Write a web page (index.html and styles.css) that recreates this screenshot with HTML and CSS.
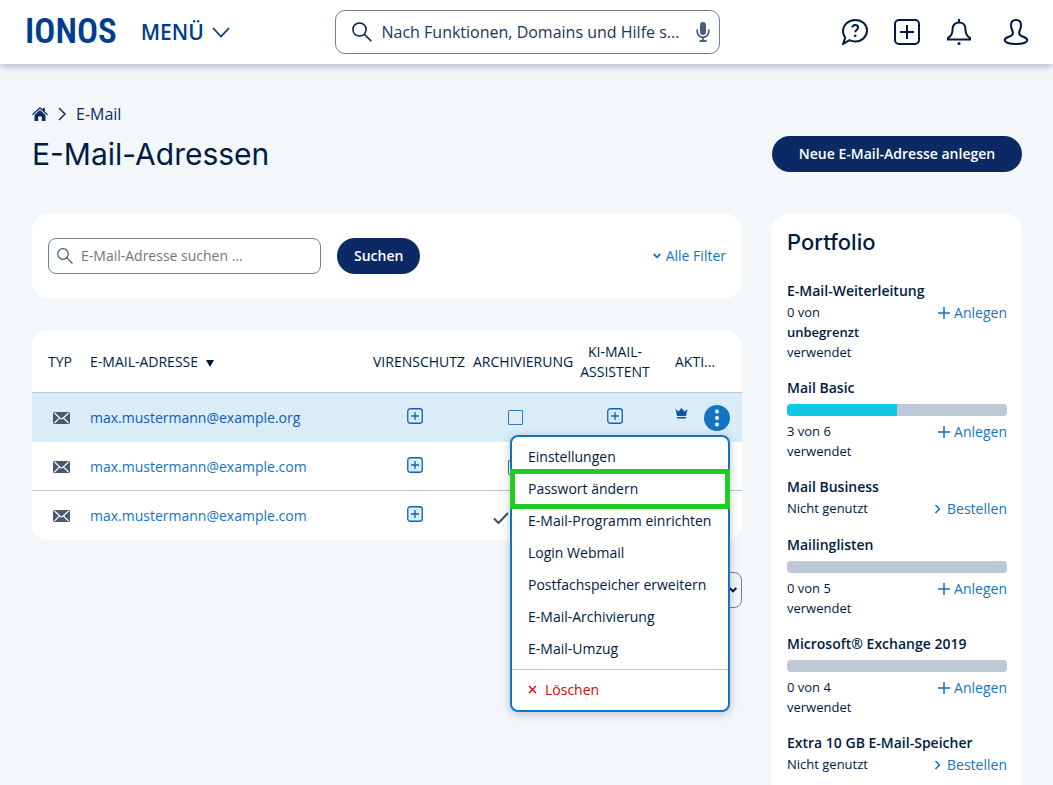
FILE: index.html
```html
<!DOCTYPE html>
<html lang="de">
<head>
<meta charset="utf-8">
<meta name="viewport" content="width=device-width, initial-scale=1">
<title>E-Mail-Adressen</title>
<link rel="stylesheet" href="styles.css">
</head>
<body>
<svg class="defs" aria-hidden="true">
  <symbol id="i-search" viewBox="0 0 20 20"><circle cx="7.5" cy="7.5" r="6.6" fill="none" stroke="currentColor" stroke-width="1.500"/><path d="M12.3 12.3l7 7" fill="none" stroke="currentColor" stroke-width="1.600"/></symbol>
  <symbol id="i-mail" viewBox="0 0 17 12"><rect width="17" height="12" rx="1.5" fill="#465a75"/><path d="M1.5 1l5.6 5.2q1.4 1.4 2.8 0L15.500 1M1.500 11l4.600-4.600M15.500 11l-4.600-4.600" fill="none" stroke="#fff" stroke-width="1.2"/></symbol>
  <symbol id="i-plusbox" viewBox="0 0 16 16"><rect x=".75" y=".75" width="14.500" height="14.500" rx="2.500" fill="#daecf8" stroke="currentColor" stroke-width="1.300"/><path d="M8 4v8M4 8h8" stroke="currentColor" stroke-width="1.300"/></symbol>
  <symbol id="i-plus" viewBox="0 0 12 12"><path d="M6 0v12M0 6h12" stroke="currentColor" stroke-width="1.500"/></symbol>
  <symbol id="i-right" viewBox="0 0 8 10"><path d="M1.500 1l4 4-4 4" fill="none" stroke="currentColor" stroke-width="1.500"/></symbol>
</svg>

<header class="topbar">
  <div class="brand">
    <a class="logo" href="#">IONOS</a>
    <button class="menu-button" type="button">MENÜ
      <svg class="menu-chevron" viewBox="0 0 18 11"><path d="M1 1l8 8.500L17 1" fill="none" stroke="currentColor" stroke-width="1.800"/></svg>
    </button>
  </div>
  <div class="global-search">
    <svg class="global-search-icon"><use href="#i-search"/></svg>
    <input type="text" aria-label="Suche" placeholder="Nach Funktionen, Domains und Hilfe s...">
    <svg class="mic" viewBox="0 0 14 20"><rect x="4" y="0" width="6" height="13" rx="3" fill="currentColor"/><path d="M1.200 7.500v2a5.800 5.800 0 0 0 11.600 0v-2M7 15v4M3.500 19h7" fill="none" stroke="currentColor" stroke-width="1.800"/></svg>
  </div>
  <nav class="tools" aria-label="Konto">
    <button type="button" aria-label="Hilfe"><svg viewBox="0 0 26 26"><path d="M1 25l2.300-6.200C1.700 16.800 1 14.600 1 12.300 1 5.900 6.500 1 13.300 1S25 5.700 25 11.600 20 22.500 13.300 22.500c-2.100 0-4.100-.5-5.800-1.300z"/><path d="M10.300 8.600c0-1.600 1.200-2.700 2.900-2.700s2.900 1 2.900 2.500c0 2.300-2.900 2.300-2.900 4.900"/><circle class="dot" cx="13.200" cy="16.800" r="1.300"/></svg></button>
    <button type="button" aria-label="Neu"><svg viewBox="0 0 26 26"><rect x="1" y="1" width="24" height="24" rx="4"/><path d="M13 6v14M6 13h14"/></svg></button>
    <button type="button" aria-label="Mitteilungen"><svg viewBox="0 0 26 26"><path d="M13 0v3M13 3.500c-3.700 0-6.400 2.600-6.400 6.200 0 5.300-1.200 7.500-4.600 9.300v1.500h22v-1.500c-3.400-1.800-4.600-4-4.600-9.300 0-3.600-2.700-6.200-6.400-6.200z"/><circle class="dot" cx="13" cy="24.500" r="1.500"/></svg></button>
    <button class="account" type="button" aria-label="Profil"><svg viewBox="0 0 26 26"><path d="M13 1c-3.200 0-5 1.900-5 5.200 0 3.600 1.400 5 1.900 7.300.4 2.600-1.200 3.400-4 4.300-2.600.8-4.100 2-4.100 3.400 0 2.300 4.600 3.800 11.200 3.800s11.200-1.500 11.200-3.800c0-1.400-1.500-2.600-4.100-3.400-2.800-.9-4.400-1.700-4-4.300.5-2.300 1.900-3.700 1.900-7.300C18 2.900 16.200 1 13 1z"/></svg></button>
  </nav>
</header>

<main class="page">
  <div class="page-head">
    <div>
      <nav class="breadcrumb" aria-label="Pfad">
        <a href="#" aria-label="Start"><svg class="home" viewBox="0 0 16 14"><path d="M8 0l2.700 2.500V1h2.200v3.500L16 7.300l-.8.900L8 1.800.8 8.200 0 7.300z" fill="currentColor"/><path d="M8 3l5.500 5v6H9.800V9.500H6.200V14H2.500V8z" fill="currentColor"/></svg></a>
        <svg class="crumb-sep" viewBox="0 0 8 14"><path d="M1 1l6 6-6 6" fill="none" stroke="currentColor" stroke-width="1.500"/></svg>
        <a href="#">E-Mail</a>
      </nav>
      <h1>E-Mail-Adressen</h1>
    </div>
    <button class="pill create" type="button">Neue E-Mail-Adresse anlegen</button>
  </div>

  <div class="columns">
    <div class="content">
      <form class="card filter">
        <div class="field">
          <svg class="field-icon"><use href="#i-search"/></svg>
          <input type="text" aria-label="E-Mail-Adresse suchen" placeholder="E-Mail-Adresse suchen ...">
        </div>
        <button class="pill" type="button">Suchen</button>
        <a class="link all-filters" href="#"><svg class="mini-down" viewBox="0 0 8 6"><path d="M.7 1l3.300 3.300L7.300 1" fill="none" stroke="currentColor" stroke-width="1.800"/></svg>Alle Filter</a>
      </form>

      <table class="card addresses">
        <thead>
          <tr>
            <th class="col-type" scope="col">TYP</th>
            <th class="col-mail" scope="col">E-MAIL-ADRESSE <svg class="sort" viewBox="0 0 8 7"><path d="M0 0h8L4 7z" fill="currentColor"/></svg></th>
            <th class="col-flag" scope="col">VIRENSCHUTZ</th>
            <th class="col-flag" scope="col">ARCHIVIERUNG</th>
            <th class="col-flag" scope="col">KI-MAIL-ASSISTENT</th>
            <th class="col-actions" scope="col">AKTI...</th>
          </tr>
        </thead>
        <tbody>
          <tr class="selected">
            <td class="col-type"><svg class="mail"><use href="#i-mail"/></svg></td>
            <td class="col-mail"><a class="link" href="#">max.mustermann@example.org</a></td>
            <td class="col-flag"><button class="icon-button" type="button" aria-label="Virenschutz hinzufügen"><svg class="box"><use href="#i-plusbox"/></svg></button></td>
            <td class="col-flag"><input class="tick" type="checkbox" aria-label="Archivierung"></td>
            <td class="col-flag"><button class="icon-button" type="button" aria-label="KI-Mail-Assistent hinzufügen"><svg class="box"><use href="#i-plusbox"/></svg></button></td>
            <td class="col-actions">
              <div class="actions">
                <svg class="crown" viewBox="0 0 13 11"><path d="M.5 1l3 2.500L6.500 0l3 3.500 3-2.500-1.500 7H2z" fill="currentColor"/><path d="M2 9h9v1.500H2z" fill="currentColor"/></svg>
                <div class="more">
                  <button class="kebab" type="button" aria-label="Aktionen"><svg viewBox="0 0 26 26"><circle cx="13" cy="6.500" r="2"/><circle cx="13" cy="13" r="2"/><circle cx="13" cy="19.500" r="2"/></svg></button>
                  <div class="menu">
                    <a href="#">Einstellungen</a>
                    <a class="marked" href="#">Passwort ändern</a>
                    <a href="#">E-Mail-Programm einrichten</a>
                    <a href="#">Login Webmail</a>
                    <a href="#">Postfachspeicher erweitern</a>
                    <a href="#">E-Mail-Archivierung</a>
                    <a href="#">E-Mail-Umzug</a>
                    <hr>
                    <a class="danger" href="#"><svg class="cross" viewBox="0 0 9 9"><path d="M1 1l7 7M8 1L1 8" stroke="currentColor" stroke-width="1.400"/></svg>Löschen</a>
                  </div>
                </div>
              </div>
            </td>
          </tr>
          <tr>
            <td class="col-type"><svg class="mail"><use href="#i-mail"/></svg></td>
            <td class="col-mail"><a class="link" href="#">max.mustermann@example.com</a></td>
            <td class="col-flag"><button class="icon-button" type="button" aria-label="Virenschutz hinzufügen"><svg class="box"><use href="#i-plusbox"/></svg></button></td>
            <td class="col-flag"><input class="tick" type="checkbox" aria-label="Archivierung"></td>
            <td></td>
            <td></td>
          </tr>
          <tr>
            <td class="col-type"><svg class="mail"><use href="#i-mail"/></svg></td>
            <td class="col-mail"><a class="link" href="#">max.mustermann@example.com</a></td>
            <td class="col-flag"><button class="icon-button" type="button" aria-label="Virenschutz hinzufügen"><svg class="box"><use href="#i-plusbox"/></svg></button></td>
            <td class="col-check"><svg class="check" viewBox="0 0 16 12"><path d="M1 6.500L5.500 11 15 1" fill="none" stroke="currentColor" stroke-width="2"/></svg></td>
            <td></td>
            <td></td>
          </tr>
        </tbody>
      </table>

      <div class="paging">
        <div class="select">
          <select aria-label="Einträge pro Seite"><option>10</option></select>
          <svg class="select-arrow" viewBox="0 0 8 6"><path d="M.7 1l3.300 3.300L7.300 1" fill="none" stroke="currentColor" stroke-width="2"/></svg>
        </div>
      </div>
    </div>

    <aside class="portfolio">
      <h2>Portfolio</h2>
      <section>
        <h3>E-Mail-Weiterleitung</h3>
        <div class="usage"><p>0 von <strong>unbegrenzt</strong> verwendet</p><a class="link" href="#"><svg class="plus"><use href="#i-plus"/></svg>Anlegen</a></div>
      </section>
      <section>
        <h3>Mail Basic</h3>
        <div class="bar"><div class="bar-fill" style="width:50%"></div></div>
        <div class="usage"><p>3 von 6 verwendet</p><a class="link" href="#"><svg class="plus"><use href="#i-plus"/></svg>Anlegen</a></div>
      </section>
      <section>
        <h3>Mail Business</h3>
        <div class="usage"><p>Nicht genutzt</p><a class="link order" href="#"><svg class="right"><use href="#i-right"/></svg>Bestellen</a></div>
      </section>
      <section>
        <h3>Mailinglisten</h3>
        <div class="bar"></div>
        <div class="usage"><p>0 von 5 verwendet</p><a class="link" href="#"><svg class="plus"><use href="#i-plus"/></svg>Anlegen</a></div>
      </section>
      <section>
        <h3>Microsoft® Exchange 2019</h3>
        <div class="bar"></div>
        <div class="usage"><p>0 von 4 verwendet</p><a class="link" href="#"><svg class="plus"><use href="#i-plus"/></svg>Anlegen</a></div>
      </section>
      <section>
        <h3>Extra 10 GB E-Mail-Speicher</h3>
        <div class="usage"><p>Nicht genutzt</p><a class="link order" href="#"><svg class="right"><use href="#i-right"/></svg>Bestellen</a></div>
      </section>
    </aside>
  </div>
</main>
</body>
</html>
```
FILE: styles.css
```css
* { box-sizing: border-box; }

:root {
  --ink: #001b41;
  --navy: #0b2a63;
  --brand: #003d8f;
  --blue: #1474c4;
  --line: #bcc8d4;
  --edge: #718095;
}

body {
  margin: 0;
  min-height: 100vh;
  display: flex;
  flex-direction: column;
  background: #f4f7fa;
  color: var(--ink);
  font: 14px/20px "Open Sans", "Noto Sans", sans-serif;
}

svg { display: block; flex: none; }
.defs { position: absolute; width: 0; height: 0; }
a { color: inherit; text-decoration: none; }
button { padding: 0; border: 0; background: none; color: inherit; font: inherit; cursor: pointer; }
input, select { font: inherit; color: inherit; }
h1, h2, h3, p { margin: 0; }

/* Top bar */
.topbar {
  display: grid;
  grid-template-columns: 1fr minmax(0, 385px) 1fr;
  align-items: center;
  height: 64px;
  padding: 0 24px 0 25px;
  background: #fff;
  box-shadow: 0 2px 8px rgba(0, 27, 65, .3);
}
.brand { display: flex; align-items: center; gap: 24px; color: var(--brand); }
.logo { font: 600 35px/40px "Roboto Condensed", Roboto, sans-serif; }
.menu-button { display: flex; align-items: center; gap: 8px; font-size: 21px; line-height: 32px; font-weight: 600; }
.menu-chevron { width: 18px; height: 11px; }
.global-search {
  display: flex;
  align-items: center;
  gap: 10px;
  height: 44px;
  padding: 0 9px 0 16px;
  border: 1px solid var(--edge);
  border-radius: 10px;
}
.global-search input { flex: 1; min-width: 0; padding: 0; border: 0; outline: 0; background: none; font-size: 16px; }
.global-search input::placeholder { color: #1b355c; opacity: 1; }
.global-search-icon { width: 20px; height: 20px; }
.mic { width: 14px; height: 20px; color: #4d5f7d; }
.tools { display: flex; justify-content: flex-end; gap: 26px; }
.tools svg { width: 26px; height: 26px; fill: none; stroke: var(--ink); stroke-width: 2; }
.tools .dot { fill: var(--ink); stroke: none; }
.account { margin-left: 5px; }

/* Page heading */
.page { flex: 1; display: flex; flex-direction: column; padding: 40px 31px 0 32px; }
.page-head { display: flex; align-items: flex-end; justify-content: space-between; margin-bottom: 38px; }
.breadcrumb { display: flex; align-items: center; gap: 10px; font-size: 16px; color: var(--navy); }
.home { width: 16px; height: 14px; }
.crumb-sep { width: 8px; height: 14px; }
h1 { margin-top: 8px; font: 400 30px/44px Inter, sans-serif; }
.pill {
  height: 36px;
  padding: 0 17px;
  border-radius: 18px;
  background: var(--navy);
  color: #fff;
  font-weight: 600;
  text-align: center;
}
.create { width: 250px; margin-bottom: 4px; }

.columns { flex: 1; display: flex; gap: 30px; }
.content { flex: 1; min-width: 0; }
.card { background: #fff; border-radius: 16px; }
.link { color: var(--blue); }

/* Filter */
.filter { display: flex; align-items: center; gap: 16px; height: 84px; padding: 0 16px; }
.field {
  display: flex;
  align-items: center;
  gap: 8px;
  width: 273px;
  height: 36px;
  padding: 0 8px;
  border: 1px solid var(--edge);
  border-radius: 8px;
}
.field input { flex: 1; min-width: 0; padding: 0; border: 0; outline: 0; background: none; }
.field input::placeholder { color: #757575; opacity: 1; }
.field-icon { width: 16px; height: 16px; color: #465a75; }
.all-filters { display: flex; align-items: center; gap: 5px; margin-left: auto; }
.mini-down { width: 8px; height: 6px; }

/* Address table */
.addresses { width: 100%; margin-top: 32px; table-layout: fixed; border-collapse: separate; border-spacing: 0; }
.addresses th { height: 63px; padding: 2px 8px 0; border-bottom: 1px solid var(--line); font-weight: 400; }
.addresses td { height: 49px; padding: 0 8px; }
.addresses tbody tr:nth-child(2) td { padding-top: 2px; border-bottom: 1px solid var(--line); }
.addresses .selected td { background: #daecf8; }
.addresses .selected .link { color: #0b5eb3; }
.addresses .col-type { width: 50px; padding-left: 16px; padding-right: 0; text-align: left; }
td.col-type .mail { margin-left: 5px; }
.addresses .col-mail { text-align: left; }
.addresses .col-flag { width: 100px; text-align: center; }
.addresses .col-actions { width: 77px; padding-left: 10px; padding-right: 12px; text-align: left; }
.addresses .col-check { padding: 4px 0 0 28px; }
.sort { display: inline-block; width: 8px; height: 7px; margin-left: 4px; }
.mail { width: 17px; height: 12px; }
.icon-button { display: block; margin: 0 auto 4px; color: #1162b3; }
.box { width: 16px; height: 16px; }
.tick { appearance: none; display: block; width: 15px; height: 15px; margin: 0 auto; border: 1px solid #2a7cc4; border-radius: 1px; }
.check { width: 16px; height: 12px; color: #3b4b63; }
.actions { display: flex; align-items: center; justify-content: space-between; }
.crown { width: 13px; height: 11px; margin-bottom: 8px; color: #0b55a5; }
.more { position: relative; }
.kebab { display: block; border-radius: 50%; background: var(--blue); }
.kebab svg { width: 26px; height: 26px; fill: #fff; }

/* Action menu */
.menu {
  position: absolute;
  top: 30px;
  right: 0;
  z-index: 2;
  width: 220px;
  padding: 4px 0;
  border: 2px solid var(--blue);
  border-radius: 8px;
  background: #fff;
  box-shadow: 0 2px 10px rgba(0, 27, 65, .25);
}
.menu a { display: flex; align-items: center; gap: 8px; height: 32px; padding: 0 16px; white-space: nowrap; }
.menu hr { margin: 4px 0; border: 0; border-top: 1px solid var(--line); }
.menu .marked { position: relative; }
.menu .marked::after { content: ""; position: absolute; inset: -4px -2px; border: 5px solid #22cc22; }
.menu .danger { color: #c80a00; }
.cross { width: 9px; height: 9px; }

/* Paging */
.paging { display: flex; justify-content: flex-end; margin-top: 32px; }
.select { position: relative; }
.select select { appearance: none; width: 72px; height: 36px; padding: 0 8px; border: 1px solid var(--edge); border-radius: 8px; background: transparent; }
.select-arrow { position: absolute; top: 15px; right: 5px; width: 8px; height: 6px; }

/* Portfolio */
.portfolio { display: flex; flex-direction: column; gap: 16px; width: 250px; padding: 16px 15px 8px; border-radius: 16px 16px 0 0; background: #fff; }
.portfolio h2 { margin-bottom: 11px; font: 500 22px/24px Inter, sans-serif; }
.portfolio h3 { font-size: 14px; line-height: 20px; font-weight: 600; }
.usage { display: flex; justify-content: space-between; align-items: flex-start; padding-top: 1px; }
.usage p { width: 88px; font-size: 13px; }
.usage strong { display: block; font-weight: 600; }
.usage .link { display: flex; align-items: center; gap: 4px; line-height: 21px; }
.usage .order { gap: 5px; }
.plus { width: 12px; height: 12px; }
.right { width: 8px; height: 10px; }
.bar { height: 12px; margin: 6px 0 4px; overflow: hidden; border-radius: 4px; background: var(--line); }
.bar-fill { height: 100%; background: #11c7e6; }
```
